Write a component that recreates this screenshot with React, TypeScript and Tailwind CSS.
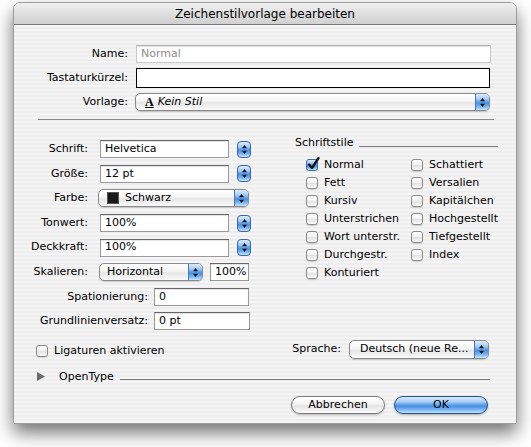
import React from "react";

const blue =
  "bg-[linear-gradient(to_bottom,#dcebfc_0%,#a6cdf6_30%,#5d9de9_50%,#4a8fe3_58%,#7ab8f4_80%,#c9e6fd_100%)]";

function Arrows() {
  return (
    <svg width="5" height="9" viewBox="0 0 5 9">
      <path d="M2.5 0 L5 3.2 L0 3.2 Z M0 5.8 L5 5.8 L2.5 9 Z" fill="#111" />
    </svg>
  );
}

function Field({ children, className = "" }: { children?: React.ReactNode; className?: string }) {
  return (
    <div
      className={`h-[18px] bg-white border border-[#9a9a9a] border-t-[#666] shadow-[inset_0_1px_1px_rgba(0,0,0,0.12)] flex items-center px-[4px] text-[11px] whitespace-nowrap ${className}`}
    >
      {children}
    </div>
  );
}

function Popup({ children, className = "" }: { children?: React.ReactNode; className?: string }) {
  return (
    <div
      className={`h-[18px] rounded-[5px] border border-[#8a8a8a] bg-[linear-gradient(to_bottom,#ffffff,#f4f4f4_45%,#e6e6e6_55%,#fafafa)] shadow-[0_1px_1px_rgba(0,0,0,0.18)] flex items-stretch overflow-hidden ${className}`}
    >
      <div className="flex-1 min-w-0 flex items-center text-[11px] whitespace-nowrap">{children}</div>
      <div className={`w-[14px] border-l border-[#4d77b3] flex items-center justify-center ${blue}`}>
        <Arrows />
      </div>
    </div>
  );
}

function Stepper() {
  return (
    <div className={`w-[14px] h-[17px] ml-[8px] rounded-[4px] border border-[#3d67a6] flex items-center justify-center ${blue}`}>
      <Arrows />
    </div>
  );
}

function Check({ label, checked = false }: { label: string; checked?: boolean }) {
  return (
    <div className="h-[18px] flex items-center">
      {checked ? (
        <div className={`relative w-[12px] h-[12px] rounded-[3px] border border-[#3d67a6] ${blue}`}>
          <svg className="absolute -top-[3px] left-[0px]" width="13" height="14" viewBox="0 0 13 14">
            <path d="M2 7.5 L5 11 L11.5 1" fill="none" stroke="#111" strokeWidth="2.3" strokeLinecap="round" strokeLinejoin="round" />
          </svg>
        </div>
      ) : (
        <div className="w-[12px] h-[12px] rounded-[3px] border border-[#8a8a8a] bg-[linear-gradient(to_bottom,#ffffff,#f1f1f1_50%,#e2e2e2_55%,#fbfbfb)] shadow-[0_1px_1px_rgba(0,0,0,0.15)]" />
      )}
      <span className="ml-[6px] text-[11px] whitespace-nowrap">{label}</span>
    </div>
  );
}

function Row({ label, labelWidth = "w-[74px]", children }: { label: string; labelWidth?: string; children: React.ReactNode }) {
  return (
    <div className="h-[24.6px] flex items-center">
      <span className={`${labelWidth} text-right text-[11px] whitespace-nowrap`}>{label}</span>
      {children}
    </div>
  );
}

export default function App() {
  return (
    <div className="w-[531px] h-[447px] bg-white overflow-hidden pt-[2px] pl-[13px] font-['DejaVu_Sans','Lucida_Grande',sans-serif] text-black">
      <div className="w-[504px] h-[422px] rounded-t-[7px] border border-[#9d9d9d] shadow-[0_9px_18px_rgba(0,0,0,0.55)] overflow-hidden bg-[repeating-linear-gradient(to_bottom,#ededed_0px,#ededed_2px,#f5f5f5_2px,#f5f5f5_4px)] flex flex-col">
        {/* title bar */}
        <div className="h-[22px] shrink-0 border-b border-[#777] bg-[linear-gradient(to_bottom,#f0f0f0,#dcdcdc_60%,#d0d0d0)] flex items-center justify-center text-[12px]">
          Zeichenstilvorlage bearbeiten
        </div>

        {/* top fields */}
        <div className="pt-[20px] flex flex-col gap-[5px]">
          <div className="flex items-center">
            <span className="w-[114px] text-right text-[11px]">Name:</span>
            <Field className="ml-[8px] w-[355px] h-[17px] border-[#c8c8c8] border-t-[#b0b0b0] text-[#8d8d8d]">Normal</Field>
          </div>
          <div className="flex items-center">
            <span className="w-[114px] text-right text-[11px]">Tastaturkürzel:</span>
            <div className="ml-[8px] w-[354px] h-[20px] bg-white border-[1.5px] border-black" />
          </div>
          <div className="flex items-center">
            <span className="w-[114px] text-right text-[11px]">Vorlage:</span>
            <Popup className="ml-[7px] w-[355px]">
              <span className="ml-[9px] font-['Liberation_Serif',serif] font-bold text-[12px] underline leading-none">A</span>
              <span className="ml-[4px] italic">Kein Stil</span>
            </Popup>
          </div>
        </div>
        <div className="mt-[8px] mx-[24px] mr-[22px] h-px bg-[#8a8a8a]" />

        {/* middle */}
        <div className="flex items-start">
          <div className="w-[237px] mt-[17px] flex flex-col">
            <Row label="Schrift:">
              <Field className="ml-[12px] w-[129px]">Helvetica</Field>
              <Stepper />
            </Row>
            <Row label="Größe:">
              <Field className="ml-[12px] w-[129px]">12 pt</Field>
              <Stepper />
            </Row>
            <Row label="Farbe:">
              <Popup className="ml-[10px] w-[151px]">
                <span className="ml-[8px] w-[12px] h-[12px] bg-[#1a1a1a] border border-[#555]" />
                <span className="ml-[6px]">Schwarz</span>
              </Popup>
            </Row>
            <Row label="Tonwert:">
              <Field className="ml-[12px] w-[129px]">100%</Field>
              <Stepper />
            </Row>
            <Row label="Deckkraft:">
              <Field className="ml-[12px] w-[129px]">100%</Field>
              <Stepper />
            </Row>
            <Row label="Skalieren:">
              <Popup className="ml-[11px] w-[104px]">
                <span className="ml-[7px]">Horizontal</span>
              </Popup>
              <Field className="ml-[7px] w-[39px] px-[3px]">100%</Field>
            </Row>
            <Row label="Spationierung:" labelWidth="w-[134px]">
              <Field className="ml-[6px] w-[95px]">0</Field>
            </Row>
            <Row label="Grundlinienversatz:" labelWidth="w-[134px]">
              <Field className="ml-[6px] w-[96px]">0 pt</Field>
            </Row>
          </div>

          <div className="ml-[44px] w-[203px] mt-[16px] flex flex-col">
            <div className="h-[14px] flex items-center">
              <span className="text-[11px]">Schriftstile</span>
              <div className="ml-[5px] mt-[7px] flex-1 h-px bg-[#7a7a7a]" />
            </div>
            <div className="mt-[6px] flex">
              <div className="w-[120px] pl-[11px] flex flex-col">
                <Check label="Normal" checked />
                <Check label="Fett" />
                <Check label="Kursiv" />
                <Check label="Unterstrichen" />
                <Check label="Wort unterstr." />
                <Check label="Durchgestr." />
                <Check label="Konturiert" />
              </div>
              <div className="flex flex-col">
                <Check label="Schattiert" />
                <Check label="Versalien" />
                <Check label="Kapitälchen" />
                <Check label="Hochgestellt" />
                <Check label="Tiefgestellt" />
                <Check label="Index" />
              </div>
            </div>
          </div>
        </div>

        {/* bottom */}
        <div className="mt-[6px] h-[19px] pl-[22px] pr-[27px] flex items-center">
          <div className="mt-[3px]">
            <Check label="Ligaturen aktivieren" />
          </div>
          <span className="ml-auto text-[11px]">Sprache:</span>
          <Popup className="ml-[8px] w-[140px] h-[19px]">
            <span className="ml-[10px]">Deutsch (neue Re...</span>
          </Popup>
        </div>

        <div className="mt-[11px] h-[14px] pl-[23px] pr-[26px] flex items-center">
          <svg width="8" height="9" viewBox="0 0 8 9">
            <path d="M0 0 L8 4.5 L0 9 Z" fill="#6b6b6b" />
          </svg>
          <span className="ml-[14px] text-[11px]">OpenType</span>
          <div className="ml-[6px] mt-[5px] flex-1 h-px bg-[#7a7a7a]" />
        </div>

        <div className="mt-[12px] pr-[28px] flex justify-end gap-[9px]">
          <div className="w-[94px] h-[18px] rounded-full border border-[#7c7c7c] bg-[linear-gradient(to_bottom,#ffffff,#f3f3f3_45%,#e3e3e3_55%,#fbfbfb)] shadow-[0_1px_2px_rgba(0,0,0,0.25)] flex items-center justify-center text-[11px]">
            Abbrechen
          </div>
          <div className={`w-[94px] h-[18px] rounded-full border border-[#284f8d] shadow-[0_1px_2px_rgba(0,0,0,0.3)] flex items-center justify-center text-[11px] ${blue}`}>
            OK
          </div>
        </div>
      </div>
    </div>
  );
}
